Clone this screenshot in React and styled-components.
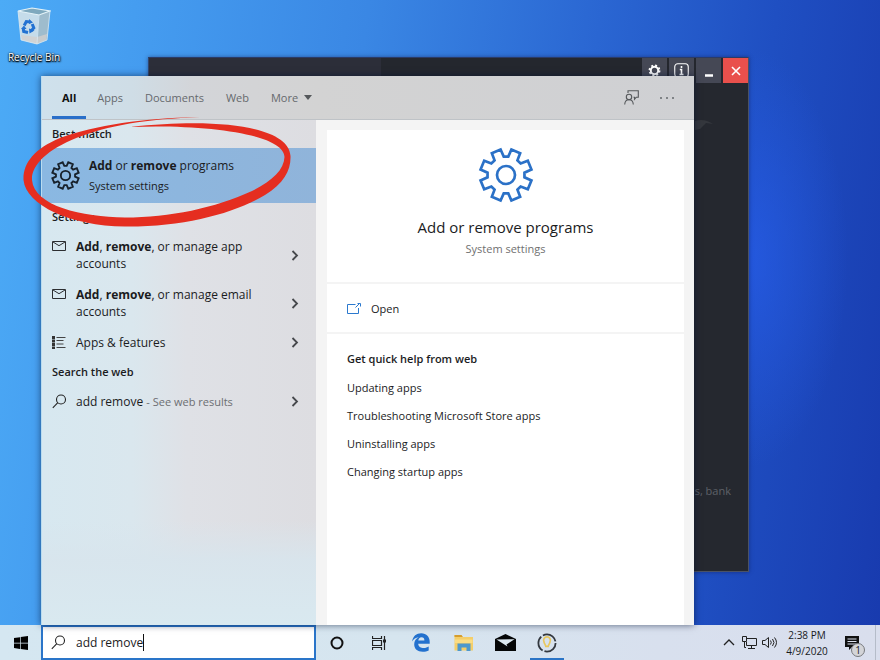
import React from "react";
import styled, { createGlobalStyle } from "styled-components";

const GlobalStyle = createGlobalStyle`
  * { box-sizing: border-box; }
  body { margin: 0; overflow: hidden; }
  button, input { font: inherit; color: inherit; }
  button { border: 0; background: none; padding: 0; cursor: default; }
  h1, h2, p, ul { margin: 0; padding: 0; }
  ul { list-style: none; }
  svg { display: block; flex: none; }
`;

const Desktop = styled.div`
  display: flex;
  flex-direction: column;
  min-height: 100vh;
  font-family: "Open Sans", "Noto Sans", sans-serif;
  font-size: 12px;
  color: #1b1c1e;
  background:
    radial-gradient(ellipse 100px 210px at 85% 39%, rgba(38, 92, 232, 0.75), rgba(38, 92, 232, 0) 100%),
    linear-gradient(98deg, #4cabf6 0%, #459df0 14%, #3a87e4 38%, #2a66d2 62%, #1f4fc2 80%, #183aae 100%);
`;

const WorkArea = styled.main`
  position: relative;
  flex: 1;
`;

const DesktopIcon = styled.button`
  position: absolute;
  left: 4px;
  top: 7px;
  width: 60px;
  display: flex;
  flex-direction: column;
  align-items: center;
  gap: 5px;
  font-size: 10px;
  line-height: 14px;
  white-space: nowrap;
  color: #fff;
  text-shadow: 1px 1px 2px #000, 0 0 2px #000, 0 1px 1px #000;
`;

const AppWindow = styled.section`
  position: absolute;
  left: 148px;
  right: 131px;
  top: 57px;
  bottom: 53px;
  display: flex;
  flex-direction: column;
  background: #25282f;
  border: 1px solid #31466f;
  border-color: #2b3b66 #4a5266 #4a5266 #31466f;
  box-shadow: 0 0 4px rgba(10, 20, 70, 0.5);
`;

const TitleBar = styled.div`
  display: flex;
  justify-content: flex-end;
  gap: 2px;
  height: 25px;
  background: linear-gradient(90deg, #2c2e39 232px, #24272e 232px);
`;

const TitleButton = styled.button`
  display: grid;
  place-items: center;
  width: 25px;
  height: 25px;
  color: #fff;
  background: ${(p) => (p.$danger ? "#e9504c" : "#454855")};
`;

const AppBody = styled.div`
  flex: 1;
  display: flex;
  flex-direction: column;
  justify-content: space-between;
  align-items: flex-end;
  padding: 34px 17px 72px 0;
  font-size: 11px;
  line-height: 16px;
  color: #5e6168;
`;

const Smudge = styled.svg`
  margin-right: 18px;
`;

const StartMenu = styled.section`
  position: absolute;
  left: 41px;
  right: 186px;
  top: 76px;
  bottom: 0;
  display: flex;
  flex-direction: column;
  border-left: 1px solid #b9dcf0;
  background: linear-gradient(90deg, #d7e8f0 0, #dae7ee 90px, #dfe1e6 145px, #dddde1 275px);
  box-shadow: 0 0 7px rgba(0, 15, 50, 0.6);
`;

const TabBar = styled.header`
  display: flex;
  align-items: stretch;
  height: 44px;
  padding: 0 9px 0 10px;
  color: #66696d;
  font-size: 11px;
  border-bottom: 1px solid #bfc3c7;
  background: linear-gradient(90deg, #cfe1ec 0, #cfdde6 90px, #d3d5d9 150px, #d3d3d3 275px, #cfd0d3 100%);
`;

const Tab = styled.button`
  display: flex;
  align-items: center;
  gap: 6px;
  padding: 0 ${(p) => (p.$active ? 10 : 11)}px;
  white-space: nowrap;
  font-weight: ${(p) => (p.$active ? 700 : 400)};
  color: ${(p) => (p.$active ? "#111" : "inherit")};
  box-shadow: ${(p) => (p.$active ? "inset 0 -3px #2a6fc9" : "none")};
`;

const Spacer = styled.div`
  flex: 1;
`;

const HeaderAction = styled.button`
  display: grid;
  place-items: center;
  width: 36px;
`;

const MenuBody = styled.div`
  flex: 1;
  display: flex;
`;

const Results = styled.nav`
  flex: 0 0 274px;
  background: linear-gradient(180deg, transparent 400px, rgba(216, 229, 237, 0.9) 440px, #d9e9f0 100%);
`;

const GroupTitle = styled.h2`
  height: 28px;
  padding-left: 10px;
  font-size: 11px;
  font-weight: 600;
  line-height: 28px;
`;

const BestMatch = styled.button`
  display: flex;
  align-items: center;
  gap: 9px;
  width: 100%;
  height: 55px;
  padding-left: 9px;
  text-align: left;
  background: linear-gradient(90deg, #8ab8e2, #90b4da);
`;

const BestTitle = styled.span`
  display: block;
  line-height: 20px;
`;

const BestSub = styled.span`
  display: block;
  font-size: 11px;
  line-height: 20px;
`;

const Result = styled.button`
  display: grid;
  grid-template-columns: 24px 1fr 10px;
  align-items: center;
  width: 100%;
  height: ${(p) => (p.$tall ? 48 : 31)}px;
  padding: 0 15px 0 10px;
  text-align: left;
  line-height: 17px;
`;

const ResultText = styled.span`
  max-width: 190px;
`;

const LeadIcon = styled.span`
  align-self: ${(p) => (p.$top ? "start" : "center")};
  padding-top: ${(p) => (p.$top ? 10 : 0)}px;
`;

const Hint = styled.span`
  font-size: 11px;
  color: #6c6e72;
`;

const Detail = styled.article`
  flex: 1;
  display: flex;
  flex-direction: column;
  gap: 2px;
  padding: 10px 10px 0 11px;
  background: #f4f4f4;
`;

const Card = styled.div`
  background: #fff;
`;

const Summary = styled(Card)`
  display: flex;
  flex-direction: column;
  align-items: center;
  height: 152px;
  padding-top: 17px;
`;

const SummaryTitle = styled.h1`
  margin-top: 12px;
  font-size: 15px;
  font-weight: 400;
  line-height: 24px;
`;

const SummarySub = styled.p`
  font-size: 11px;
  line-height: 20px;
  color: #707070;
`;

const OpenAction = styled.button`
  display: flex;
  align-items: center;
  gap: 10px;
  height: 48px;
  padding-left: 20px;
  font-size: 11px;
  background: #fff;
`;

const Help = styled(Card)`
  flex: 1;
  padding: 10px 20px;
  font-size: 11px;
`;

const HelpTitle = styled.h2`
  font-size: 11px;
  font-weight: 600;
  line-height: 30px;
`;

const HelpLink = styled.a`
  display: block;
  line-height: 28px;
  color: inherit;
  text-decoration: none;
`;

const Marker = styled.svg`
  position: absolute;
  left: 20px;
  top: 114px;
  pointer-events: none;
`;

const Taskbar = styled.footer`
  display: flex;
  height: 35px;
  background: linear-gradient(90deg, #d5e7f1 0, #d6e5ef 45%, #d8e0ee 75%, #d9deed 100%);
`;

const TaskButton = styled.button`
  display: grid;
  place-items: center;
  width: ${(p) => p.$width || 42}px;
`;

const ActiveTaskButton = styled(TaskButton)`
  background: linear-gradient(#2b74c6, #2b74c6) center bottom / 34px 2px no-repeat;
`;

const SearchBox = styled.label`
  display: flex;
  align-items: center;
  flex: 0 0 275px;
  padding-left: 8px;
  border: 2px solid #2a75c9;
  background: #fff;
`;

const SearchInput = styled.input`
  field-sizing: content;
  max-width: 220px;
  margin-left: 10px;
  padding: 0;
  border: 0;
  outline: 0;
  background: none;
`;

const Caret = styled.span`
  width: 1px;
  height: 17px;
  background: #111;
`;

const Tray = styled.div`
  display: flex;
  align-items: center;
  color: #17191c;
`;

const TrayButton = styled.button`
  display: grid;
  place-items: center;
  width: 20px;
  height: 100%;
`;

const Clock = styled.time`
  width: 56px;
  font-size: 10px;
  line-height: 16px;
  text-align: center;
`;

const Notifications = styled.button`
  position: relative;
  display: grid;
  place-items: center;
  width: 34px;
  height: 100%;
`;

const Badge = styled.span`
  position: absolute;
  right: 4px;
  bottom: 3px;
  width: 14px;
  height: 14px;
  border: 1px solid #77797d;
  border-radius: 50%;
  background: #d3d4d8;
  font-size: 10px;
  line-height: 12px;
  text-align: center;
`;

const ShowDesktop = styled.button`
  width: 5px;
  height: 100%;
  margin-left: 6px;
  border-left: 1px solid #b5bcc9;
`;

const polar = (r, deg) => {
  const a = (deg * Math.PI) / 180;
  return `${(r * Math.sin(a)).toFixed(2)},${(-r * Math.cos(a)).toFixed(2)}`;
};
const gearPoints = Array.from({ length: 8 }, (_, i) => {
  const a = i * 45;
  return [polar(26, a - 12), polar(18.6, a - 7), polar(18.6, a + 7), polar(26, a + 12)].join(" ");
}).join(" ");

function Gear({ size, color, stroke }) {
  return (
    <svg width={size} height={size} viewBox="-28 -28 56 56" fill="none" stroke={color} strokeWidth={stroke} aria-hidden="true">
      <polygon points={gearPoints} />
      <circle r="9" />
    </svg>
  );
}

const Mail = () => (
  <svg width="14" height="10" viewBox="0 0 14 10" fill="none" stroke="#2c2e31" aria-hidden="true">
    <path d="M.5.5h13v9H.5zM1 1l6 3.7L13 1" />
  </svg>
);

const ListIcon = () => (
  <svg width="14" height="13" viewBox="0 0 14 13" aria-hidden="true">
    <path d="M0 0h3v3H0zM0 3.5h3v3H0zM0 7h3v3H0zM0 10.5h3V13H0z" fill="#333" />
    <path d="M4.5 1.5h9M4.5 4.5h7M4.5 8h7M4.5 11.5h9" stroke="#444" />
  </svg>
);

const SearchIcon = () => (
  <svg width="15" height="15" viewBox="0 0 15 15" fill="none" stroke="#222" strokeWidth="1.1" aria-hidden="true">
    <circle cx="9" cy="5.5" r="4.5" />
    <path d="M5.8 8.7.8 13.8" />
  </svg>
);

const Chevron = () => (
  <svg width="8" height="11" viewBox="0 0 8 11" fill="none" stroke="#46484c" strokeWidth="1.8" aria-hidden="true">
    <path d="M1.5 1 6 5.5 1.5 10" />
  </svg>
);

const RecycleBin = () => (
  <svg width="34" height="38" viewBox="0 0 34 38" aria-hidden="true">
    <path d="M1 4 22 7 20 37 4 33z" fill="#c5dcea" />
    <path d="m22 7 11-3-3 29-10 4z" fill="#9ebccd" />
    <path d="M1 4 15 1l18 3-11 4z" fill="#7fa9be" stroke="#e5f3f8" strokeWidth="1.2" />
    <path d="m4 28 16 2 10-3-1 6-9 4-15-4z" fill="#d4d0cc" opacity=".75" />
    <path d="M1 4 4 33l16 4 10-4 3-29M22 8l-2 29" fill="none" stroke="#dceaf1" strokeWidth=".8" />
    <g fill="none" stroke="#2272d2" strokeWidth="3">
      <path d="m7.2 18.5 2.1-4 4 .5M15.2 17l1.6 4-3 3M11 25.5l-4.3-1-.5-3.5" />
    </g>
    <path d="m12 12 4 3.5-4 1.5zM17.5 23.5l-5 3-.5-5zM4 22l3-3.5 2.5 3.5z" fill="#2272d2" />
  </svg>
);

const WindowGear = () => (
  <svg width="13" height="13" viewBox="-7 -7 14 14" fill="none" stroke="#fff" aria-hidden="true">
    <circle r="4" strokeWidth="2.2" />
    <circle r="5.4" strokeWidth="2" strokeDasharray="2.1 2.14" />
  </svg>
);

const WindowInfo = () => (
  <svg width="15" height="15" viewBox="0 0 15 15" fill="none" stroke="#fff" aria-hidden="true">
    <rect x=".75" y=".75" width="13.5" height="13.5" rx="3" strokeWidth="1.1" />
    <path d="M7.5 3v2M5.8 6.5h1.7v5M5.5 11.5h4" strokeWidth="1.6" />
  </svg>
);

const Feedback = () => (
  <svg width="15" height="15" viewBox="0 0 15 15" fill="none" stroke="#55585b" strokeWidth="1.1" aria-hidden="true">
    <circle cx="5" cy="7" r="2.7" />
    <path d="M.7 14.5c.2-3 1.8-4.7 4.3-4.7s4.1 1.7 4.3 4.7M4 3V.8h10.3v6.4h-2l-1.8 2V7.2h-1" />
  </svg>
);

const OpenIcon = () => (
  <svg width="14" height="11" viewBox="0 0 14 11" fill="none" stroke="#2b79ce" aria-hidden="true">
    <path d="M8.5 1.5h-8v9h11V5M8.5 4.5l4-4M10.5.5h3v3" />
  </svg>
);

const Edge = () => (
  <svg width="18" height="19" viewBox="0 0 18 19" aria-hidden="true">
    <path d="M.2 8.4C.9 3.1 4.5.2 9.2.2c5.4 0 8.5 3.7 8.5 8.6v1.900H6.2c.2 3 2.7 4.300 5.500 4.300 2 0 3.700-.6 5-1.500v3.900c-1.600.9-3.600 1.400-6 1.400-5.300 0-8.500-2.900-8.500-7.500 0-3.200 1.700-5.600 4.500-7C3.600 4.700 1.700 6 .2 8.400zm6.100-.9h6.100c0-2-.9-3.200-2.900-3.200-1.900 0-3 1.300-3.200 3.200z" fill="#2371ce" />
  </svg>
);

const Folder = () => (
  <svg width="19" height="16" viewBox="0 0 19 16" aria-hidden="true">
    <path d="M.5 0h7l1.300 2H19v13.500H.5z" fill="#f4ce69" />
    <path d="M.5 0h7l1.300 2H.5z" fill="#d59d2f" />
    <path d="M3.500 8.500h13V16h-4v-3.500h-5V16h-4z" fill="#4e98cc" />
    <path d="M1 4.500h17.500V8H1z" fill="#fbdc83" />
  </svg>
);

const MailApp = () => (
  <svg width="21" height="17" viewBox="0 0 21 17" aria-hidden="true">
    <path d="M0 5 10.5 0 21 5v12H0z" fill="#050607" />
    <path d="m1.5 5.5 18-.2-8 5.3 1 1.9z" fill="#dce8f0" />
  </svg>
);

const Norton = () => (
  <svg width="20" height="20" viewBox="0 0 20 20" fill="none" aria-hidden="true">
    <circle cx="10" cy="10" r="8.6" stroke="#33383f" strokeWidth="1.8" strokeDasharray="16 2" />
    <path d="M7 8.800a3.400 3.400 0 1 1 6 0c0 1.800-1.400 2.200-1.800 4.600H8.800C8.400 11 7 10.600 7 8.800z" stroke="#e9c85e" strokeWidth="1.7" />
  </svg>
);

const results = [
  { icon: <Mail />, tall: true, text: <><b>Add</b>, <b>remove</b>, or manage app accounts</> },
  { icon: <Mail />, tall: true, text: <><b>Add</b>, <b>remove</b>, or manage email accounts</> },
  { icon: <ListIcon />, text: "Apps & features" },
];

const helpLinks = ["Updating apps", "Troubleshooting Microsoft Store apps", "Uninstalling apps", "Changing startup apps"];

function ResultRow({ icon, tall, children }) {
  return (
    <Result $tall={tall}>
      <LeadIcon $top={tall}>{icon}</LeadIcon>
      <ResultText>{children}</ResultText>
      <Chevron />
    </Result>
  );
}

function BackgroundWindow() {
  return (
    <AppWindow aria-label="Application">
      <TitleBar>
        <TitleButton aria-label="Settings"><WindowGear /></TitleButton>
        <TitleButton aria-label="Information"><WindowInfo /></TitleButton>
        <TitleButton aria-label="Minimize">
          <svg width="10" height="14"><path d="M1 11.500h8" stroke="#fff" strokeWidth="2.5" /></svg>
        </TitleButton>
        <TitleButton $danger aria-label="Close">
          <svg width="10" height="10"><path d="m1 1 8 8M9 1 1 9" stroke="#fff" strokeWidth="1.6" /></svg>
        </TitleButton>
      </TitleBar>
      <AppBody>
        <Smudge width="18" height="14" viewBox="0 0 18 14" aria-hidden="true">
          <path d="M0 4Q9 1 18 7l-7-1-6 6-5 1z" fill="#34373d" />
        </Smudge>
        <p>s, bank</p>
      </AppBody>
    </AppWindow>
  );
}

function SearchMenu() {
  return (
    <StartMenu aria-label="Search">
      <TabBar>
        <Tab $active>All</Tab>
        <Tab>Apps</Tab>
        <Tab>Documents</Tab>
        <Tab>Web</Tab>
        <Tab>
          More
          <svg width="8" height="5"><path d="M0 0h8L4 5z" fill="#55585b" /></svg>
        </Tab>
        <Spacer />
        <HeaderAction aria-label="Feedback"><Feedback /></HeaderAction>
        <HeaderAction aria-label="Options">
          <svg width="14" height="2"><path d="M0 1h2M6 1h2M12 1h2" stroke="#66696d" strokeWidth="1.6" /></svg>
        </HeaderAction>
      </TabBar>
      <MenuBody>
        <Results>
          <GroupTitle>Best match</GroupTitle>
          <BestMatch>
            <Gear size={29} color="#17212b" stroke={3.6} />
            <span>
              <BestTitle><b>Add</b> or <b>remove</b> programs</BestTitle>
              <BestSub>System settings</BestSub>
            </span>
          </BestMatch>
          <GroupTitle>Settings</GroupTitle>
          {results.map((r, i) => (
            <ResultRow key={i} icon={r.icon} tall={r.tall}>{r.text}</ResultRow>
          ))}
          <GroupTitle>Search the web</GroupTitle>
          <ResultRow icon={<SearchIcon />}>add remove <Hint>- See web results</Hint></ResultRow>
        </Results>
        <Detail>
          <Summary>
            <Gear size={56} color="#2b71c7" stroke={2.7} />
            <SummaryTitle>Add or remove programs</SummaryTitle>
            <SummarySub>System settings</SummarySub>
          </Summary>
          <OpenAction><OpenIcon />Open</OpenAction>
          <Help>
            <HelpTitle>Get quick help from web</HelpTitle>
            <ul>
              {helpLinks.map((t) => (
                <li key={t}><HelpLink href="#">{t}</HelpLink></li>
              ))}
            </ul>
          </Help>
        </Detail>
      </MenuBody>
    </StartMenu>
  );
}

export default function App() {
  return (
    <Desktop>
      <GlobalStyle />
      <WorkArea>
        <DesktopIcon><RecycleBin />Recycle Bin</DesktopIcon>
        <BackgroundWindow />
        <SearchMenu />
        <Marker width="275" height="116" viewBox="20 114 275 116" aria-hidden="true">
          <path
            d="M200 117.5C150 117 95 125 60 138C34 149 23 163 23.5 180C26 205 70 226 125 226.5C185 227 235 213 265 195C284 183 291 170 290.5 156C289 128 225 117 130 127C205 124 284 134 284.5 157C284 170 272 181 252 191C215 208 170 217.5 125 217.5C82 217 34 206 32 180C31 150 95 119 200 117.5Z"
            fill="#e52e20"
          />
        </Marker>
      </WorkArea>
      <Taskbar>
        <TaskButton $width={41} aria-label="Start">
          <svg width="14" height="14" viewBox="0 0 14 14"><path d="m0 2 6-.8v5.5H0zM6.7 1.1 14 0v6.7H6.7zM0 7.4h6v5.5L0 12zM6.7 7.4H14V14l-7.3-1z" /></svg>
        </TaskButton>
        <SearchBox>
          <SearchIcon />
          <SearchInput aria-label="Type here to search" defaultValue="add remove" />
          <Caret />
        </SearchBox>
        <TaskButton aria-label="Cortana">
          <svg width="14" height="14"><circle cx="7" cy="7" r="5.5" fill="none" stroke="#111" strokeWidth="2" /></svg>
        </TaskButton>
        <TaskButton aria-label="Task View">
          <svg width="14" height="14" fill="none" stroke="#222"><path d="M.5 0v2.500h9V0M.5 4.500h9v5h-9zM.5 14v-2.500h9V14M12.500 0v14" strokeWidth="1.2" /><path d="M11 3.500h3v3h-3z" fill="#222" stroke="none" /></svg>
        </TaskButton>
        <TaskButton aria-label="Microsoft Edge"><Edge /></TaskButton>
        <TaskButton aria-label="File Explorer"><Folder /></TaskButton>
        <TaskButton aria-label="Mail"><MailApp /></TaskButton>
        <ActiveTaskButton aria-label="Security app"><Norton /></ActiveTaskButton>
        <Spacer />
        <Tray>
          <TrayButton aria-label="Show hidden icons">
            <svg width="12" height="7"><path d="m1 6 5-5 5 5" fill="none" stroke="#222" strokeWidth="1.3" /></svg>
          </TrayButton>
          <TrayButton aria-label="Network">
            <svg width="15" height="13" fill="none" stroke="#222"><path d="M5 2.500h9.500v7H4.500V6M9.500 9.500v2.500M6 12.500h7M.5.5h4v5h-4zM2.500 5.500v6H4" /></svg>
          </TrayButton>
          <TrayButton aria-label="Volume">
            <svg width="15" height="13" fill="none" stroke="#222"><path d="M.5 4.500h2.500L6.500 1.500v10L3 8.500H.5zM8.500 4.500q1.500 2 0 4M10.500 3q3 3.500 0 7M12.500 1.500q4 5 0 10" /></svg>
          </TrayButton>
          <Clock>2:38 PM<br />4/9/2020</Clock>
          <Notifications aria-label="1 new notification">
            <svg width="14" height="14" viewBox="0 0 14 14"><path d="M0 0h14v11H7l-3 3v-3H0z" fill="#111" /><path d="M2.500 3h9M2.500 5.500h9M2.500 8h9" stroke="#dbe0ed" /></svg>
            <Badge>1</Badge>
          </Notifications>
          <ShowDesktop aria-label="Show desktop" />
        </Tray>
      </Taskbar>
    </Desktop>
  );
}
